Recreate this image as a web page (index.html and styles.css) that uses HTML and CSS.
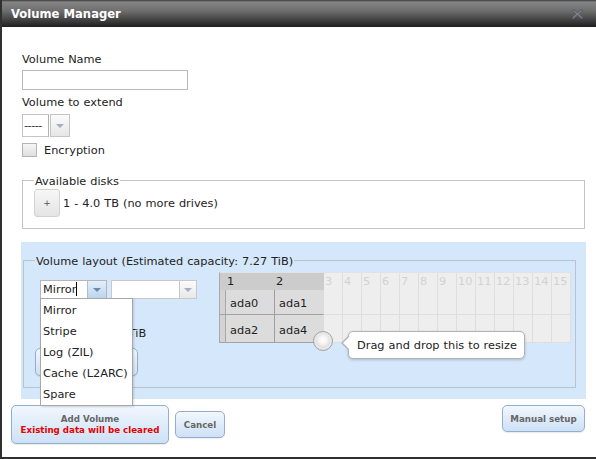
FILE: index.html
```html
<!DOCTYPE html>
<html>
<head>
<meta charset="utf-8">
<title>Volume Manager</title>
<link rel="stylesheet" href="styles.css">
</head>
<body>
<div class="dialog">
  <div class="titlebar">
    <span class="title">Volume Manager</span>
    <svg class="close" width="11" height="10" viewBox="0 0 11 10">
      <path d="M1.5 1.5 L9.5 8.5 M9.5 1.5 L1.5 8.5" stroke="#5c6169" stroke-width="2.8" stroke-linecap="square"/>
      <path d="M1.5 1.5 L9.5 8.5 M9.5 1.5 L1.5 8.5" stroke="#8e939b" stroke-width="0.9"/>
    </svg>
  </div>

  <div class="form">
    <label class="lbl">Volume Name</label>
    <div class="input"></div>
    <label class="lbl">Volume to extend</label>
    <div class="select-small">
      <span class="ss-text">-----</span>
      <span class="ss-arrow"><span class="tri"></span></span>
    </div>
    <div class="check-row">
      <span class="checkbox"></span>
      <span>Encryption</span>
    </div>
    <fieldset class="disks">
      <legend>Available disks</legend>
      <div class="disk-row">
        <button class="plus">+</button>
        <span>1 - 4.0 TB (no more drives)</span>
      </div>
    </fieldset>
  </div>

  <div class="layout-panel">
    <fieldset class="layout">
      <legend>Volume layout (Estimated capacity: 7.27 TiB)</legend>
      <div class="layout-inner">
        <div class="layout-left">
          <div class="selects">
            <div class="select mirror">
              <span class="sel-text"><span class="caret">Mirror</span></span>
              <span class="sel-arrow active"><span class="tri"></span></span>
              <ul class="dropdown">
                <li>Mirror</li>
                <li>Stripe</li>
                <li>Log (ZIL)</li>
                <li>Cache (L2ARC)</li>
                <li>Spare</li>
              </ul>
            </div>
            <div class="select second">
              <span class="sel-text"></span>
              <span class="sel-arrow"><span class="tri"></span></span>
            </div>
          </div>
          <div class="capacity">Capacity: 7.27 TiB</div>
          <button class="btn reset">Reset Layout</button>
        </div>

        <div class="grid-wrap">
          <div class="grid">
            <div class="c h a g"></div><div class="c h a">1</div><div class="c h a e">2</div>
            <div class="c h">3</div><div class="c h">4</div><div class="c h">5</div><div class="c h">6</div><div class="c h">7</div><div class="c h">8</div><div class="c h">9</div><div class="c h">10</div><div class="c h">11</div><div class="c h">12</div><div class="c h">13</div><div class="c h">14</div><div class="c h">15</div>

            <div class="c a g"></div><div class="c a d">ada0</div><div class="c a d e">ada1</div>
            <div class="c"></div><div class="c"></div><div class="c"></div><div class="c"></div><div class="c"></div><div class="c"></div><div class="c"></div><div class="c"></div><div class="c"></div><div class="c"></div><div class="c"></div><div class="c"></div><div class="c"></div>

            <div class="c a g last"></div><div class="c a d last">ada2</div><div class="c a d e last">ada4</div>
            <div class="c"></div><div class="c"></div><div class="c"></div><div class="c"></div><div class="c"></div><div class="c"></div><div class="c"></div><div class="c"></div><div class="c"></div><div class="c"></div><div class="c"></div><div class="c"></div><div class="c"></div>
          </div>
          <span class="knob"></span>
          <div class="tooltip">Drag and drop this to resize</div>
        </div>
      </div>
    </fieldset>
  </div>

  <div class="actions">
    <button class="btn add"><span class="add-title">Add Volume</span><span class="warn">Existing data will be cleared</span></button>
    <button class="btn cancel">Cancel</button>
    <button class="btn manual">Manual setup</button>
  </div>
</div>
</body>
</html>
```

FILE: styles.css
```css
* { box-sizing: border-box; }

html, body {
  margin: 0;
  padding: 0;
  background: #fff;
}

body {
  font-family: "DejaVu Sans", Verdana, sans-serif;
  font-size: 11.33px;
  line-height: 13px;
  color: #222;
  word-spacing: 0.4px;
}

.dialog {
  width: 596px;
  height: 459px;
  border-left: 2px solid #303030;
  border-bottom: 2px solid #303030;
  display: flex;
  flex-direction: column;
  overflow: hidden;
}

/* title bar */
.titlebar {
  flex: none;
  height: 27px;
  display: flex;
  align-items: center;
  justify-content: space-between;
  padding: 1px 13px 0 9px;
  background: linear-gradient(to bottom, #3a3a3a 0, #858585 2px, #6e6e6e 40%, #3c3c3c 78%, #1e1e1e 100%);
}

.title {
  color: #fff;
  font-weight: bold;
  font-size: 11.6px;
  word-spacing: 0;
}

.close { display: block; margin-top: -1px; }

/* top form */
.form {
  padding: 26px 0 0 20px;
}

.lbl { display: block; }

.input {
  width: 166px;
  height: 20px;
  border: 1px solid #b8b8b8;
  margin: 4px 0 6px;
}

.select-small {
  display: flex;
  margin-top: 5px;
  height: 23px;
}

.ss-text {
  width: 27px;
  border: 1px solid #c4c4c4;
  border-right-color: #b0b0b0;
  padding: 4px 0 0 1px;
  letter-spacing: -0.5px;
  color: #333;
}

.ss-arrow {
  width: 20px;
  margin-left: 1px;
  border: 1px solid #c4c4c4;
  background: linear-gradient(#fbfbfb, #e6e6e6);
  display: flex;
  align-items: center;
  justify-content: center;
}

.tri {
  width: 0;
  height: 0;
  border-left: 4px solid transparent;
  border-right: 4px solid transparent;
  border-top: 4px solid #a6aec0;
}

.check-row {
  display: flex;
  align-items: center;
  gap: 7px;
  margin-top: 6px;
  height: 14px;
}

.checkbox {
  width: 15px;
  height: 14px;
  border: 1px solid #b4b4b4;
  background: linear-gradient(#f6f6f6, #dedede);
}

fieldset {
  margin: 0;
  border: 1px solid #c4c4c4;
  min-width: 0;
}

legend {
  padding: 3px 1px 0;
  line-height: 13px;
}

.disks {
  width: 563px;
  margin-top: 15px;
  padding: 0 11px 11px 11px;
}

.disk-row {
  display: flex;
  align-items: center;
  gap: 3px;
  margin-top: 1px;
}

.plus {
  width: 26px;
  height: 28px;
  padding: 0;
  border: 1px solid #d2d2d2;
  border-radius: 3px;
  background: linear-gradient(#f7f7f7, #e4e4e4);
  color: #555;
  font-family: "DejaVu Sans", sans-serif;
  font-size: 9px;
  line-height: 1;
}

/* volume layout panel */
.layout-panel {
  margin: 13px 10px 0 19px;
  height: 157px;
  background: #d5e7fb;
  padding: 10px 0 0 0;
}

.layout {
  margin: 0 10px 0 2px;
  padding: 0 0 11px 11px;
  border-color: #b9c3cc;
}

.layout-inner {
  display: flex;
  margin-top: 4px;
  padding-left: 5px;
}

.layout-left {
  flex: none;
  width: 179px;
  padding-top: 8px;
}

.selects {
  display: flex;
  gap: 4px;
}

.select {
  position: relative;
  display: flex;
  height: 19px;
  border: 1px solid #b6b6b6;
  background: #fff;
}

.select.mirror { width: 67px; }
.select.second { width: 86px; border-color: #c8c8c8; }

.sel-text {
  flex: 1;
  padding: 2px 0 0 2px;
}

.caret {
  border-right: 1px solid #000;
}

.sel-arrow {
  width: 19px;
  border-left: 1px solid #c8c8c8;
  background: linear-gradient(#fbfbfb, #e8e8e8);
  display: flex;
  align-items: center;
  justify-content: center;
}

.second .sel-arrow { width: 17px; }

.sel-arrow.active {
  background: linear-gradient(#e3eefa, #bcd5ee);
  border-left-color: #a9c0d8;
}

.sel-arrow.active .tri { border-top-color: #6b89aa; }

.dropdown {
  position: absolute;
  top: 100%;
  left: -1px;
  z-index: 5;
  width: 93px;
  margin: 0;
  padding: 1px 0 0;
  list-style: none;
  background: #fff;
  border: 1px solid #a8a8a8;
  box-shadow: 1px 1px 2px rgba(0, 0, 0, 0.15);
}

.dropdown li {
  height: 21px;
  line-height: 21px;
  padding-left: 2px;
  white-space: nowrap;
}

.capacity {
  margin-top: 28px;
  padding-left: 3px;
  white-space: nowrap;
}

.btn {
  border: 1px solid #93afcd;
  border-radius: 5px;
  background: linear-gradient(#f1f7fd, #cde1f6);
  color: #666;
  font-family: "DejaVu Sans", sans-serif;
  font-weight: bold;
  font-size: 8.7px;
  word-spacing: 0;
  padding: 0;
  box-shadow: 0 1px 1px rgba(0, 0, 0, 0.08);
}

.reset {
  display: block;
  margin: 8px 0 0 -5px;
  width: 103px;
  height: 28px;
}

/* grid */
.grid-wrap {
  position: relative;
  flex: none;
}

.grid {
  display: grid;
  grid-template-columns: 6px 49px 49px repeat(13, 19px);
  grid-template-rows: 17px 25px 28px;
  border-left: 1px solid #a8a8a8;
  border-top: 1px solid #e2e2e2;
}

.c {
  background: #eeeeee;
  border-right: 1px solid #dedede;
  border-bottom: 1px solid #dedede;
  color: #d2d2d2;
}

.c.h {
  padding: 2px 0 0 1px;
  border-bottom-color: #eeeeee;
}

.c.a {
  background: #dcdcdc;
  color: #222;
  border-right-color: #9e9e9e;
  border-bottom-color: #a2a2a2;
}

.c.h.a {
  background: #cccccc;
  border-bottom-color: #cccccc;
  border-right-color: #cccccc;
}

.c.g {
  background: #d3d3d3;
  border-right-color: #a8a8a8;
}

.c.h.g { background: #cccccc; border-right-color: #cccccc; }

.c.e { border-right-color: #dcdcdc; }
.c.h.a.e { border-right-color: #cccccc; }

.c.last { border-bottom-color: #a2a2a2; }

.c.d {
  display: flex;
  align-items: center;
  padding: 3px 0 0 4px;
}

.knob {
  position: absolute;
  left: 94px;
  top: 59px;
  width: 20px;
  height: 20px;
  border-radius: 50%;
  border: 1px solid #a5a5a5;
  background: radial-gradient(circle at 50% 45%, #ffffff 0, #f4f4f4 30%, #d6d6d6 65%, #bdbdbd 100%);
  box-shadow: inset 0 0 0 2px #e9e9e9;
  z-index: 2;
}

.tooltip {
  position: absolute;
  left: 129px;
  top: 59px;
  width: 177px;
  height: 28px;
  background: #fff;
  border: 1px solid #b0b4b8;
  border-radius: 5px;
  box-shadow: 0 1px 3px rgba(0, 0, 0, 0.2);
  padding: 7px 0 0 8px;
  white-space: nowrap;
  z-index: 3;
}

.tooltip::before,
.tooltip::after {
  content: "";
  position: absolute;
  top: 4px;
  width: 0;
  height: 0;
  border-top: 7px solid transparent;
  border-bottom: 7px solid transparent;
}

.tooltip::before {
  left: -8px;
  border-right: 7px solid #b0b4b8;
}

.tooltip::after {
  left: -6px;
  border-right: 7px solid #fff;
}

/* actions */
.actions {
  display: flex;
  align-items: flex-start;
  padding: 6px 11px 0 9px;
}

.add {
  width: 158px;
  height: 39px;
  display: flex;
  flex-direction: column;
  align-items: center;
  justify-content: center;
  line-height: 10.5px;
}

.warn { color: #e60000; }

.cancel {
  width: 50px;
  height: 27px;
  margin: 6px 0 0 6px;
}

.manual {
  width: 83px;
  height: 27px;
  margin-left: auto;
}
```
